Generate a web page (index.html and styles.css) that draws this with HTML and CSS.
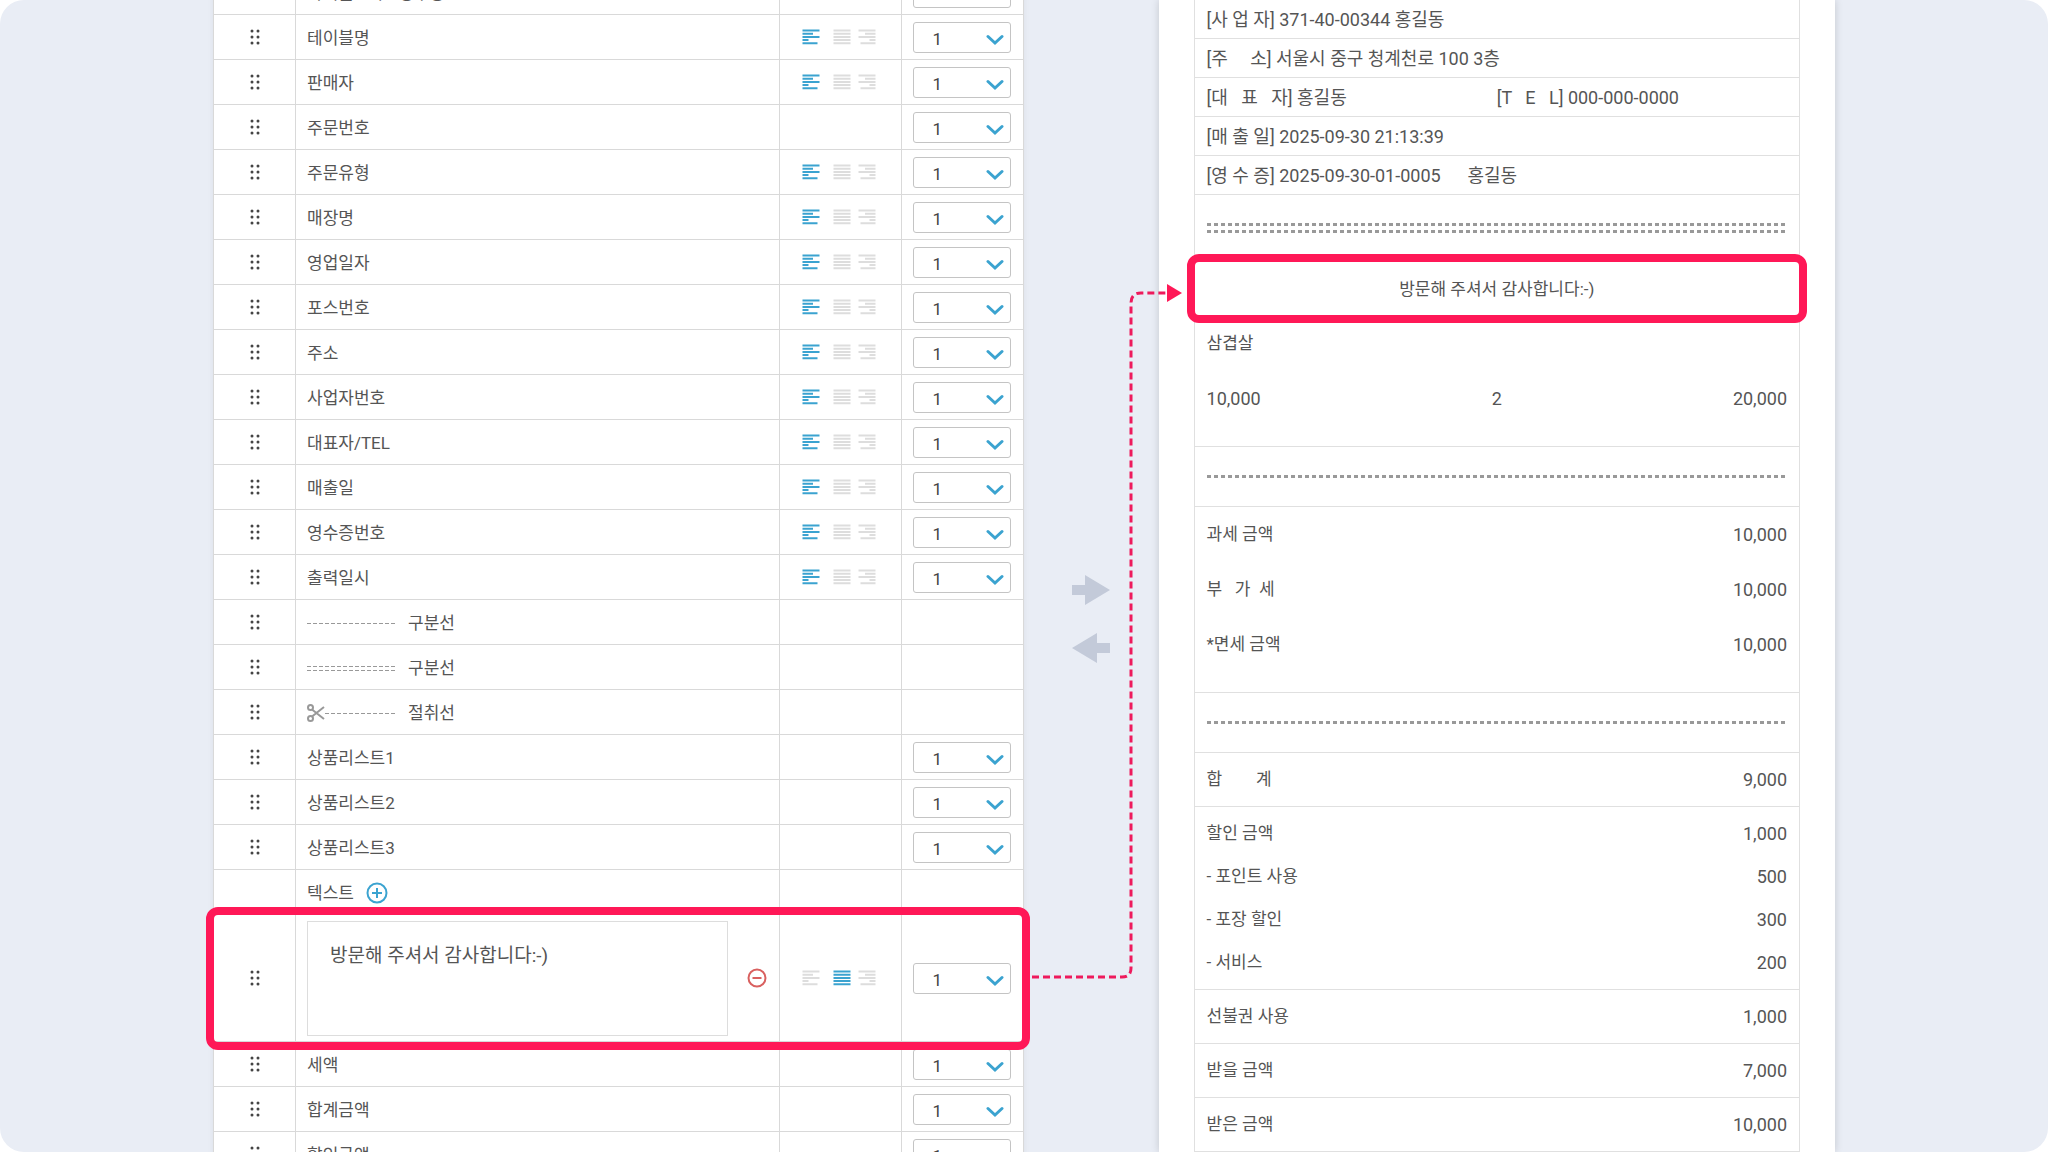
FILE: index.html
```html
<!DOCTYPE html>
<html lang="ko">
<head>
    <meta charset="UTF-8">
    <meta name="viewport" content="width=device-width, initial-scale=1.0">
    <title>영수증 출력 설정</title>
    <link rel="stylesheet" href="styles.css">
</head>
<body>

    <!-- Icons -->
    <svg class="icons" aria-hidden="true">
        <symbol id="drag" viewBox="0 0 10 16">
            <circle cx="2" cy="2" r="1.5"/><circle cx="8" cy="2" r="1.5"/>
            <circle cx="2" cy="8" r="1.5"/><circle cx="8" cy="8" r="1.5"/>
            <circle cx="2" cy="14" r="1.5"/><circle cx="8" cy="14" r="1.5"/>
        </symbol>
        <symbol id="left" viewBox="0 0 18 16">
            <path d="M0.5 1.5h17M0.5 4.7h10.5M0.5 7.9h17M0.5 11.1h6M0.5 14.3h15"/>
        </symbol>
        <symbol id="center" viewBox="0 0 18 16">
            <path d="M0.5 1.5h17M0.5 4.7h17M0.5 7.9h17M0.5 11.1h17M0.5 14.3h17"/>
        </symbol>
        <symbol id="right" viewBox="0 0 18 16">
            <path d="M0.5 1.5h17M7 4.7h10.5M0.5 7.9h17M11.5 11.1h6M2.5 14.3h15"/>
        </symbol>
        <symbol id="chevron" viewBox="0 0 18 12">
            <path d="M2 2.5l7 6.5l7-6.5"/>
        </symbol>
    </svg>

    <main class="page">

        <!-- Output items -->
        <table class="items">
            <tbody id="rows"></tbody>
        </table>

        <!-- Move buttons -->
        <div class="middle">
            <button class="move" aria-label="추가"><svg viewBox="0 0 38 30"><path d="M0 10h13V0l25 15l-25 15V20H0z"/></svg></button>
            <button class="move" aria-label="제외"><svg viewBox="0 0 38 30"><path d="M38 10H25V0L0 15l25 15V20h13z"/></svg></button>
            <svg class="connector" viewBox="0 0 152 700">
                <path class="dash" d="M2 692H92Q101 692 101 683V18Q101 8 111 8H136"/>
                <path class="head" d="M137 -1L152 8L137 17z"/>
            </svg>
        </div>

        <!-- Receipt preview -->
        <div class="receipt">
            <div class="paper">
                <div class="line">[사 업 자] 371-40-00344 홍길동</div>
                <div class="line">[주     소] 서울시 중구 청계천로 100 3층</div>
                <div class="line two"><span>[대   표   자] 홍길동</span><span>[T   E   L] 000-000-0000</span></div>
                <div class="line">[매 출 일] 2025-09-30 21:13:39</div>
                <div class="line">[영 수 증] 2025-09-30-01-0005      홍길동</div>
                <div class="divider double"><i></i><i></i></div>
                <div class="message">방문해 주셔서 감사합니다:-)</div>
                <div class="group wide">
                    <div class="row"><span>삼겹살</span></div>
                    <div class="row price"><span>10,000</span><span>2</span><span>20,000</span></div>
                </div>
                <div class="divider"><i></i></div>
                <dl class="group wide">
                    <div class="row"><dt>과세 금액</dt><dd>10,000</dd></div>
                    <div class="row"><dt>부   가  세</dt><dd>10,000</dd></div>
                    <div class="row"><dt>*면세 금액</dt><dd>10,000</dd></div>
                </dl>
                <div class="divider"><i></i></div>
                <dl class="group"><div class="row"><dt>합        계</dt><dd>9,000</dd></div></dl>
                <dl class="group">
                    <div class="row"><dt>할인 금액</dt><dd>1,000</dd></div>
                    <div class="row"><dt>- 포인트 사용</dt><dd>500</dd></div>
                    <div class="row"><dt>- 포장 할인</dt><dd>300</dd></div>
                    <div class="row"><dt>- 서비스</dt><dd>200</dd></div>
                </dl>
                <dl class="group"><div class="row"><dt>선불권 사용</dt><dd>1,000</dd></div></dl>
                <dl class="group"><div class="row"><dt>받을 금액</dt><dd>7,000</dd></div></dl>
                <dl class="group"><div class="row"><dt>받은 금액</dt><dd>10,000</dd></div></dl>
            </div>
        </div>

    </main>

    <script src="script.js"></script>
</body>
</html>
```

FILE: styles.css
```css
* {
    box-sizing: border-box;
}

body {
    margin: 0;
    background: #fff;
    color: #555;
    font-family: Roboto, "Noto Sans CJK KR", sans-serif;
    font-size: 17px;
    line-height: 24px;
}

button {
    padding: 0;
    border: none;
    background: none;
    cursor: pointer;
}

svg {
    display: block;
}

.icons {
    display: none;
}

.page {
    display: grid;
    grid-template-columns: 810fr 135px 676fr;
    align-items: start;
    height: 100vh;
    padding: 0 213px;
    background: #e9edf5;
    border-radius: 24px;
    overflow: hidden;
}

/* Output items */
.items {
    width: 100%;
    margin-top: -30px;
    table-layout: fixed;
    border-spacing: 0;
    border-left: 1px solid #d9d9d9;
    background: #fff;
    box-shadow: 0 0 6px rgba(0, 0, 0, 0.06);
}

.items td {
    height: 45px;
    padding: 0;
    border-right: 1px solid #d9d9d9;
    border-bottom: 1px solid #d9d9d9;
}

.items .drag {
    width: 82px;
}

.drag svg {
    width: 10px;
    height: 16px;
    margin: 0 auto;
    fill: #444;
}

.name-box {
    display: flex;
    align-items: center;
    padding: 2px 0 0 11px;
}

.items .align {
    width: 122px;
}

.align-box {
    display: flex;
    padding-left: 22px;
}

.align button {
    margin-right: 7px;
}

.align button:first-child {
    margin-right: 13px;
}

.align svg {
    width: 18px;
    height: 16px;
    stroke: #ddd;
    stroke-width: 2;
}

.align .on svg {
    stroke: #3ba3d0;
}

.items .count {
    width: 122px;
}

.select {
    position: relative;
    width: 98px;
    margin-left: 11px;
}

.select select {
    display: block;
    appearance: none;
    width: 100%;
    height: 31px;
    padding: 4px 0 0 19px;
    border: 1px solid #c4c4c4;
    border-radius: 3px;
    background: #fff;
    color: #444;
    font-family: Roboto, sans-serif;
    font-size: 17px;
}

.select svg {
    position: absolute;
    right: 7px;
    top: 12px;
    width: 18px;
    height: 12px;
    fill: none;
    stroke: #3ba3d0;
    stroke-width: 3;
    stroke-linecap: round;
    pointer-events: none;
}

.sample {
    width: 89px;
    height: 18px;
    margin-right: 12px;
    fill: none;
    stroke: #999;
}

.add {
    margin-left: 12px;
}

.add svg,
.remove svg {
    width: 22px;
    height: 22px;
    fill: none;
    stroke: #3ba3d0;
    stroke-width: 2;
}

.remove svg {
    width: 20px;
    height: 20px;
    stroke: #d9605f;
}

.name-box textarea {
    flex: 1;
    height: 115px;
    padding: 20px 22px;
    border: 1px solid #ddd;
    resize: none;
    color: #555;
    font-family: inherit;
    font-size: 19px;
    line-height: 28px;
}

.remove {
    margin: 0 12px 0 19px;
}

.items .picked {
    position: relative;
}

.items .picked td {
    height: 127px;
}

.picked .name-box {
    padding-top: 0;
}

/* Highlight frames */
.picked td:first-child::after,
.message::after {
    content: "";
    position: absolute;
    z-index: 1;
    inset: -8px;
    border: 8px solid #ff1857;
    border-radius: 12px;
    pointer-events: none;
}

.picked td:first-child::after {
    right: -6px;
}

/* Middle */
.middle {
    position: relative;
    display: flex;
    flex-direction: column;
    align-items: center;
    gap: 28px;
    padding-top: 575px;
}

.move svg {
    width: 38px;
    height: 30px;
    fill: #c3cad9;
}

.connector {
    position: absolute;
    left: 6px;
    top: 285px;
    z-index: 1;
    width: 152px;
    height: 700px;
    overflow: visible;
    pointer-events: none;
}

.dash {
    fill: none;
    stroke: #ee1a5c;
    stroke-width: 3;
    stroke-dasharray: 7 4;
}

.head {
    fill: #ff1857;
}

/* Receipt */
.receipt {
    min-height: 100vh;
    padding: 0 35px;
    background: #fff;
    box-shadow: 0 0 8px rgba(0, 0, 0, 0.16);
}

.paper {
    border: solid #e0e0e0;
    border-width: 0 1px;
}

.paper > div,
.paper > dl {
    display: flex;
    flex-direction: column;
    margin: 0;
    padding: 0 12px;
    border-bottom: 1px solid #e0e0e0;
}

.paper .line {
    display: block;
    height: 39px;
    font-size: 18px;
    line-height: 39px;
    white-space: pre;
}

.paper .two {
    display: grid;
    grid-template-columns: 1fr 1fr;
}

.paper .divider {
    justify-content: center;
    gap: 4px;
    height: 60px;
}

.paper .double {
    height: 67px;
}

.divider i {
    height: 3px;
    background: repeating-linear-gradient(90deg, #999 0 4px, transparent 4px 7px);
}

.paper .message {
    position: relative;
    height: 54px;
    line-height: 54px;
    text-align: center;
}

.paper .group {
    padding: 5px 12px;
}

.paper .wide {
    padding: 0 12px 20px;
}

.row {
    display: flex;
    justify-content: space-between;
    line-height: 43px;
    white-space: pre;
}

.wide .row {
    line-height: 55px;
}

.row dd,
.price {
    margin: 0;
    font-size: 18px;
}
```

FILE: script.js
```js
const names = [
    "타이틀 - 매출영수증", "테이블명", "판매자", "주문번호", "주문유형", "매장명",
    "영업일자", "포스번호", "주소", "사업자번호", "대표자/TEL", "매출일",
    "영수증번호", "출력일시", "single", "double", "cut",
    "상품리스트1", "상품리스트2", "상품리스트3", "add", "message",
    "세액", "합계금액", "할인금액"
];

// Rows with no align buttons
const noAlign = ["주문번호", "single", "double", "cut", "상품리스트1", "상품리스트2",
    "상품리스트3", "add", "세액", "합계금액", "할인금액"];
const noCount = ["single", "double", "cut", "add"];

const scissors = '<g stroke-width="2"><circle cx="3.5" cy="3.5" r="2.5"/><circle cx="3.5" cy="14.5" r="2.5"/><path d="M5 5.5L17 15M5 12.5L17 3"/></g>';

const special = {
    single: '<svg class="sample" viewBox="0 0 89 18"><path stroke-dasharray="4 2" d="M0 9.5h89"/></svg>구분선',
    double: '<svg class="sample" viewBox="0 0 89 18"><path stroke-dasharray="4 2" d="M0 7.5h89M0 11.5h89"/></svg>구분선',
    cut: `<svg class="sample" viewBox="0 0 89 18"><path stroke-dasharray="4 2" d="M18 9.5h71"/>${scissors}</svg>절취선`,
    add: '텍스트<button class="add" aria-label="텍스트 추가"><svg viewBox="0 0 22 22"><circle cx="11" cy="11" r="9.5"/><path d="M11 6v10M6 11h10"/></svg></button>',
    message: '<textarea aria-label="텍스트">방문해 주셔서 감사합니다:-)</textarea><button class="remove" aria-label="삭제"><svg viewBox="0 0 20 20"><circle cx="10" cy="10" r="8.5"/><path d="M5.5 10h9"/></svg></button>'
};

const labels = { left: "왼쪽 정렬", center: "가운데 정렬", right: "오른쪽 정렬" };

function alignButtons(active) {
    return Object.keys(labels).map(side =>
        `<button class="${side === active ? "on" : ""}" aria-label="${labels[side]}"><svg><use href="#${side}"/></svg></button>`
    ).join("");
}

document.getElementById("rows").innerHTML = names.map((name, i) => {
    const active = i === 0 || name === "message" ? "center" : "left";
    const drag = name === "add" ? "" : '<svg><use href="#drag"/></svg>';
    const align = noAlign.includes(name) ? "" : `<div class="align-box">${alignButtons(active)}</div>`;
    const count = noCount.includes(name) ? "" :
        '<div class="select"><select aria-label="글자 크기"><option>1</option><option>2</option></select><svg><use href="#chevron"/></svg></div>';

    return `<tr class="${name === "message" ? "picked" : ""}">
        <td class="drag">${drag}</td>
        <td><div class="name-box">${special[name] || name}</div></td>
        <td class="align">${align}</td>
        <td class="count">${count}</td>
    </tr>`;
}).join("");
```
